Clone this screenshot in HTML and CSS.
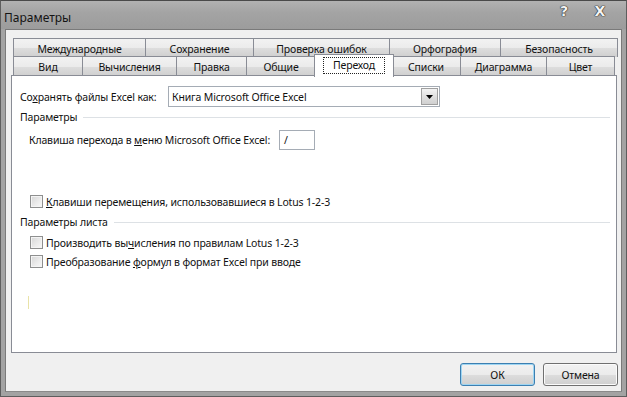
FILE: index.html
```html
<!DOCTYPE html>
<html lang="ru">
<head>
<meta charset="utf-8">
<title>Параметры</title>
<link rel="stylesheet" href="styles.css">
</head>
<body>
<div class="window">
  <div class="titlebar">
    <span class="title">Параметры</span>
    <div class="caption-btns">
      <span class="cap cap-help">?</span>
      <span class="cap cap-close">X</span>
    </div>
  </div>
  <div class="client">
    <div class="tabs">
      <div class="tab-row back">
        <div class="tab w-intl">Международные</div>
        <div class="tab w-save">Сохранение</div>
        <div class="tab w-check">Проверка ошибок</div>
        <div class="tab w-spell">Орфография</div>
        <div class="tab w-sec">Безопасность</div>
      </div>
      <div class="tab-row front">
        <div class="tab w-view">Вид</div>
        <div class="tab w-calc">Вычисления</div>
        <div class="tab w-edit">Правка</div>
        <div class="tab w-gen">Общие</div>
        <div class="tab selected w-trans"><span class="focus">Переход</span></div>
        <div class="tab w-lists">Списки</div>
        <div class="tab w-chart">Диаграмма</div>
        <div class="tab w-color">Цвет</div>
      </div>
    </div>
    <div class="panel">
      <div class="row save-row">
        <span class="label">Со<u>х</u>ранять файлы Excel как:</span>
        <div class="combo">
          <span class="combo-text">Книга Microsoft Office Excel</span>
          <span class="combo-btn"><svg width="7" height="4" viewBox="0 0 7 4"><path d="M0 0H7L3.5 4Z" fill="#000"/></svg></span>
        </div>
      </div>
      <div class="group group-1"><span class="group-title">Параметры</span><span class="group-line"></span></div>
      <div class="row hotkey-row">
        <span class="label">Клавиша перехода в <u>м</u>еню Microsoft Office Excel:</span>
        <div class="textbox">/</div>
      </div>
      <div class="row check-row check-first">
        <span class="checkbox"></span><span class="label"><u>К</u>лавиши перемещения, использовавшиеся в Lotus 1-2-3</span>
      </div>
      <div class="group group-2"><span class="group-title">Параметры листа</span><span class="group-line"></span></div>
      <div class="row check-row check-second">
        <span class="checkbox"></span><span class="label">Производить вы<u>ч</u>исления по правилам Lotus 1-2-3</span>
      </div>
      <div class="row check-row">
        <span class="checkbox"></span><span class="label">Преобразование <u>ф</u>ормул в формат Excel при вводе</span>
      </div>
      <span class="caret-mark"></span>
    </div>
    <div class="footer">
      <button class="btn btn-default">ОК</button>
      <button class="btn">Отмена</button>
    </div>
  </div>
</div>
</body>
</html>
```
FILE: styles.css
```css
* { box-sizing: border-box; }
html, body { margin: 0; padding: 0; }
body {
  width: 627px;
  height: 397px;
  overflow: hidden;
  background: #9c9c9c;
  font-family: "Noto Sans", "Open Sans", sans-serif;
  font-size: 10.5px;
  letter-spacing: -0.15px;
  color: #111;
}
.window {
  width: 627px;
  height: 397px;
  display: flex;
  flex-direction: column;
  background: #a3a3a3;
  border: 1px solid #5e5e5e;
  border-top-color: #4a4a4a;
}
.titlebar {
  height: 28px;
  flex: none;
  display: flex;
  align-items: center;
  justify-content: space-between;
  padding: 0 0 0 3px;
  background: linear-gradient(180deg, #b2b2b2 0%, #a4a4a4 40%, #9c9c9c 100%);
}
.title {
  font-size: 12px;
  letter-spacing: 0;
  color: #141414;
  padding-top: 4px;
}
.caption-btns {
  display: flex;
  align-items: center;
  margin-top: -8px;
}
.cap {
  font-family: "DejaVu Sans", sans-serif;
  font-weight: bold;
  color: #f4f4f4;
  text-shadow: 0 0 1px #222, 0 0 1px #222, 0 0 1px #222;
  font-size: 14px;
  letter-spacing: 0;
  display: inline-block;
  text-align: center;
}
.cap-help { width: 14px; margin-right: 22px; }
.cap-close { width: 14px; margin-right: 19px; }

.client {
  flex: none;
  height: 363px;
  margin: 0 4px 0 4px;
  background: #f0f0f0;
  border: 1px solid #7a7a7a;
  border-bottom-color: #8a8a8a;
  padding: 8px 4px 0 5px;
  display: flex;
  flex-direction: column;
}
.tabs {
  padding-left: 2px;
  height: 38px;
  flex: none;
}
.tab-row {
  display: flex;
  height: 19px;
}
.tab {
  flex: none;
  height: 19px;
  border: 1px solid #898c95;
  border-bottom: none;
  margin-left: -1px;
  background: linear-gradient(180deg, #f2f2f2 0%, #ebebeb 50%, #dddddd 51%, #cfcfcf 100%);
  display: flex;
  align-items: center;
  justify-content: center;
  white-space: nowrap;
  color: #111;
  padding-top: 1px;
}
.tab:first-child { margin-left: 0; }
.front .tab { height: 20px; margin-top: -1px; }
.w-intl { width: 133px; }
.w-save { width: 109px; }
.w-check { width: 137px; }
.w-spell { width: 112px; }
.w-sec { width: 118px; }
.w-view { width: 70px; }
.w-calc { width: 95px; }
.w-edit { width: 71px; }
.w-gen { width: 70px; }
.w-lists { width: 70px; }
.w-chart { width: 87px; }
.w-color { width: 69px; }
.tab.selected {
  position: relative;
  z-index: 2;
  width: 80px;
  height: 23px;
  margin: -3px -2px 0 -2px;
  background: #fff;
  padding-top: 0;
  padding-bottom: 1px;
}
.tab.selected + .tab { margin-left: -1px; }
.focus {
  border: 1px dotted #222;
  padding: 0 9px 1px 9px;
  line-height: 14px;
}

.panel {
  position: relative;
  height: 278px;
  flex: none;
  background: #fff;
  border: 1px solid #898c95;
  margin-top: -1px;
  padding: 10px 0 0 0;
}
.row {
  display: flex;
  align-items: center;
  white-space: nowrap;
}
.save-row { height: 21px; padding-left: 8px; }
.save-row .label { width: 148px; flex: none; }
.combo {
  width: 272px;
  height: 21px;
  border: 1px solid #a5acb5;
  display: flex;
  align-items: stretch;
}
.combo-text { flex: 1; padding-left: 3px; display: flex; align-items: center; }
.combo-btn {
  width: 17px;
  margin: 1px;
  border: 1px solid #a0a0a0;
  background: linear-gradient(180deg, #f3f3f3 0%, #e0e0e0 50%, #d0d0d0 100%);
  display: flex;
  align-items: center;
  justify-content: center;
}
.group {
  display: flex;
  align-items: center;
  height: 14px;
  padding-left: 8px;
  padding-right: 6px;
}
.group-1 { margin-top: 3px; }
.group-2 { margin-top: 4px; }
.group-title { flex: none; margin-right: 6px; }
.group-line { flex: 1; height: 1px; background: #dde1e5; margin-top: 1px; }
.hotkey-row { height: 20px; margin-top: 6px; padding-left: 17px; }
.hotkey-row .label { width: 250px; flex: none; }
.textbox {
  width: 36px;
  height: 20px;
  flex: none;
  border: 1px solid #a5acb5;
  padding-left: 4px;
  display: flex;
  align-items: center;
}
.check-row { height: 19px; padding-left: 18px; }
.check-first { margin-top: 42px; }
.check-second { margin-top: 4px; }
.checkbox {
  width: 13px;
  height: 13px;
  border: 1px solid #8e8f8f;
  background: linear-gradient(135deg, #d6d6d6 0%, #ececec 60%, #f8f8f8 100%);
  box-shadow: inset 0 0 0 1px #f4f4f4;
  margin-right: 3px;
  flex: none;
}
.caret-mark {
  position: absolute;
  left: 16px;
  top: 220px;
  width: 1px;
  height: 13px;
  background: #e9e3a8;
}

.footer {
  flex: none;
  display: flex;
  justify-content: flex-end;
  gap: 8px;
  padding: 10px 0 0 0;
  margin-right: -1px;
}
.btn {
  width: 75px;
  height: 23px;
  font-family: inherit;
  font-size: 10.5px;
  letter-spacing: -0.15px;
  color: #111;
  border: 1px solid #707070;
  border-radius: 3px;
  background: linear-gradient(180deg, #f2f2f2 0%, #ebebeb 50%, #dddddd 51%, #cfcfcf 100%);
  box-shadow: inset 0 0 0 1px #fbfbfb;
  padding: 0;
}
.btn-default {
  border-color: #3c7fb1;
  box-shadow: inset 0 0 0 1px #9ed5f2;
}
u { text-decoration-thickness: 1px; text-underline-offset: 1px; }
```
